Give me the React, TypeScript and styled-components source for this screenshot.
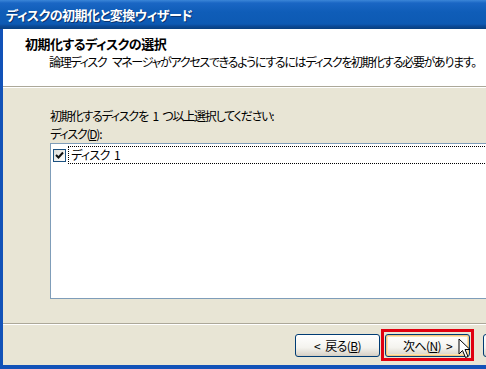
import styled, { createGlobalStyle } from 'styled-components'

const GlobalStyle = createGlobalStyle`
  html, body {
    margin: 0;
    padding: 0;
    background: #e8e5d5;
  }
  body {
    font-family: 'Noto Sans CJK JP', 'Noto Sans', sans-serif;
    font-feature-settings: 'palt';
    font-size: 12px;
    color: #000;
  }
`

export default function App() {
  return (
    <>
      <GlobalStyle />
      <Window>
        <TitleBar>
          <TitleText>ディスクの初期化と変換ウィザード</TitleText>
        </TitleBar>
        <Frame>
          <Header>
            <HeaderTitle>初期化するディスクの選択</HeaderTitle>
            <HeaderSub>論理ディスク マネージャがアクセスできるようにするにはディスクを初期化する必要があります。</HeaderSub>
          </Header>
          <Rule />
          <Body>
            <Label>初期化するディスクを 1 つ以上選択してください:</Label>
            <Label>
              ディスク(<u>D</u>):
            </Label>
            <ListBox>
              <ListItem>
                <CheckBox>
                  <svg width="9" height="9" viewBox="0 0 9 9">
                    <path d="M1 4 L3.5 6.5 L8 1.5" fill="none" stroke="#111" strokeWidth="2" />
                  </svg>
                </CheckBox>
                <ItemText>ディスク 1</ItemText>
              </ListItem>
            </ListBox>
          </Body>
          <Rule />
          <Footer>
            <Button>
              &lt; 戻る(<u>B</u>)
            </Button>
            <Highlighted>
              <Button $default>
                次へ(<u>N</u>) &gt;
              </Button>
              <RedBox />
              <Cursor width="14" height="22" viewBox="0 0 14 22">
                <path
                  d="M1 1 L1 16 L4.5 12.5 L7.5 19.5 L10 18.5 L7 11.5 L12 11.5 Z"
                  fill="#fff"
                  stroke="#000"
                  strokeWidth="1"
                  strokeLinejoin="round"
                />
              </Cursor>
            </Highlighted>
            <Button aria-label="キャンセル" />
          </Footer>
        </Frame>
      </Window>
    </>
  )
}

const Window = styled.div`
  width: 486px;
  height: 369px;
  overflow: hidden;
  display: flex;
  flex-direction: column;
  background: #1252b8;
`

const TitleBar = styled.div`
  height: 29px;
  flex-shrink: 0;
  display: flex;
  align-items: center;
  padding-left: 6px;
  box-sizing: border-box;
  background: linear-gradient(
    to bottom,
    #3b86d8 0px,
    #1a66c4 3px,
    #0f5db8 12px,
    #0d5ab3 24px,
    #0b4a98 26px,
    #08407f 29px
  );
`

const TitleText = styled.span`
  color: #fff;
  font-weight: bold;
  font-size: 13px;
  letter-spacing: -0.5px;
  text-shadow: 1px 1px 0 #0a3470;
  margin-top: -1px;
`

const Frame = styled.div`
  flex: 1;
  display: flex;
  flex-direction: column;
  margin-left: 3px;
  margin-bottom: 4px;
  background: #e8e5d5;
  min-height: 0;
`

const Header = styled.div`
  height: 57px;
  flex-shrink: 0;
  background: #fff;
  padding: 7px 0 0 22px;
  box-sizing: border-box;
`

const HeaderTitle = styled.div`
  font-weight: bold;
  font-size: 13px;
  line-height: 16px;
  letter-spacing: -0.5px;
`

const HeaderSub = styled.div`
  margin: 2px 0 0 24px;
  font-size: 12px;
  line-height: 16px;
  letter-spacing: -1.3px;
  word-spacing: 4px;
  white-space: nowrap;
`

const Rule = styled.div`
  height: 2px;
  flex-shrink: 0;
  border-top: 1px solid #aca899;
  border-bottom: 1px solid #fff;
  box-sizing: border-box;
`

const Body = styled.div`
  flex: 1;
  padding: 19px 0 0 47px;
  box-sizing: border-box;
  display: flex;
  flex-direction: column;
  min-height: 0;
`

const Label = styled.div`
  font-size: 12px;
  line-height: 18px;
  letter-spacing: -1.2px;
  word-spacing: 3px;
  white-space: nowrap;
`

const ListBox = styled.div`
  margin-top: 0;
  margin-right: -20px;
  height: 156px;
  background: #fff;
  border: 1px solid #7f9db9;
  box-sizing: border-box;
  padding: 2px 0 0 2px;
`

const ListItem = styled.div`
  display: flex;
  align-items: center;
  height: 18px;
`

const CheckBox = styled.span`
  width: 11px;
  height: 11px;
  border: 1px solid #1c5180;
  background: linear-gradient(135deg, #dcdcd7, #fff);
  display: inline-flex;
  align-items: center;
  justify-content: center;
  flex-shrink: 0;
  margin-right: 2px;
`

const ItemText = styled.span`
  flex: 1;
  height: 18px;
  line-height: 16px;
  padding-left: 2px;
  border: 1px dotted #000;
  box-sizing: border-box;
  font-size: 12px;
  letter-spacing: -0.6px;
  word-spacing: 2px;
`

const Footer = styled.div`
  height: 40px;
  flex-shrink: 0;
  display: flex;
  align-items: center;
  justify-content: flex-end;
  gap: 5px;
  margin-right: -72px;
  padding-top: 1px;
  box-sizing: border-box;
`

const Button = styled.button<{ $default?: boolean }>`
  width: 85px;
  height: 23px;
  border: 1px solid #003c74;
  border-radius: 3px;
  font-family: inherit;
  font-feature-settings: 'palt';
  font-size: 12px;
  letter-spacing: -0.6px;
  word-spacing: 3px;
  color: #000;
  padding: 0;
  background: linear-gradient(to bottom, #ffffff 0%, #f4f3ee 60%, #d6d0c5 100%);
  box-shadow: ${(p) =>
    p.$default ? 'inset 0 0 0 1px #f7c57c, inset 0 0 0 2px #fbe3b2' : 'inset 0 -1px 0 #d6d0c5'};
  &:last-child {
    margin-left: 8px;
    width: 75px;
  }
`

const Highlighted = styled.div`
  position: relative;
  display: flex;
`

const RedBox = styled.div`
  position: absolute;
  left: -4px;
  top: -5px;
  right: -4px;
  bottom: -4px;
  border: 3px solid #e00010;
  pointer-events: none;
`

const Cursor = styled.svg`
  position: absolute;
  left: 73px;
  top: 4px;
`
